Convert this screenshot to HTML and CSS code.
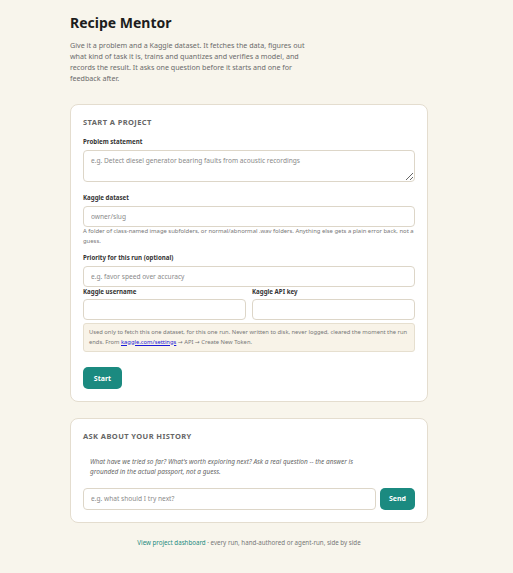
FILE: index.html
```html
<!DOCTYPE html>
<html>
<head>
<meta charset="utf-8">
<link rel="stylesheet" href="styles.css">
</head>
<body>
<main class="page">
  <h1 class="title">Recipe Mentor</h1>
  <p class="intro">Give it a problem and a Kaggle dataset. It fetches the data, figures out what kind of task it is, trains and quantizes and verifies a model, and records the result. It asks one question before it starts and one for feedback after.</p>

  <section class="card">
    <h2 class="card-title">START A PROJECT</h2>
    <label class="label">Problem statement</label>
    <textarea class="field textarea" placeholder="e.g. Detect diesel generator bearing faults from acoustic recordings"></textarea>

    <label class="label">Kaggle dataset</label>
    <input class="field" placeholder="owner/slug">
    <p class="hint">A folder of class-named image subfolders, or normal/abnormal .wav folders. Anything else gets a plain error back, not a guess.</p>

    <label class="label">Priority for this run (optional)</label>
    <input class="field" placeholder="e.g. favor speed over accuracy">

    <div class="cols">
      <div class="col">
        <label class="label tight">Kaggle username</label>
        <input class="field">
      </div>
      <div class="col">
        <label class="label tight">Kaggle API key</label>
        <input class="field">
      </div>
    </div>
    <div class="note">Used only to fetch this one dataset, for this one run. Never written to disk, never logged, cleared the moment the run ends. From <a href="#">kaggle.com/settings</a> → API → Create New Token.</div>
    <button class="btn start">Start</button>
  </section>

  <section class="card card2">
    <h2 class="card-title">ASK ABOUT YOUR HISTORY</h2>
    <p class="ask">What have we tried so far? What's worth exploring next? Ask a real question -- the answer is grounded in the actual passport, not a guess.</p>
    <div class="ask-row">
      <input class="field grow" placeholder="e.g. what should I try next?">
      <button class="btn send">Send</button>
    </div>
  </section>

  <p class="footer"><a href="#">View project dashboard</a> · every run, hand-authored or agent-run, side by side</p>
</main>
</body>
</html>
```
FILE: styles.css
```css
* { box-sizing: border-box; }
html, body { margin: 0; padding: 0; }
body {
  background: #f8f5ec;
  font-family: "Noto Sans", "Open Sans", sans-serif;
  color: #222;
}
.page {
  width: 358px;
  margin: 0 0 0 70px;
  padding-top: 12px;
}
.title {
  font-size: 14px;
  font-weight: 700;
  margin: 0;
  line-height: 22px;
  color: #1d1d1d;
}
.intro {
  font-size: 7.15px;
  line-height: 11px;
  color: #6b6b6b;
  margin: 5.5px 0 0;
  width: 245px;
}
.card {
  background: #fff;
  border: 1px solid #e4ddcf;
  border-radius: 8px;
  padding: 12px;
  margin-top: 20.5px;
  display: flex;
  flex-direction: column;
}
.card2 { margin-top: 15.5px; }
.card-title {
  font-size: 7.5px;
  font-weight: 700;
  letter-spacing: 0.4px;
  color: #666;
  margin: 0 0 8.5px;
  line-height: 11px;
}
.label {
  display: block;
  font-size: 6.15px;
  font-weight: 700;
  color: #333;
  line-height: 9px;
  margin-bottom: 4.5px;
}
.label.tight { margin-bottom: 2.5px; }
.field {
  display: block;
  width: 100%;
  height: 21px;
  margin: 0;
  border: 1px solid #ddd6c8;
  border-radius: 4px;
  background: #fff;
  font-family: inherit;
  font-size: 6.6px;
  padding: 0 7px;
  color: #333;
  outline: none;
}
.field::placeholder { color: #8a8a8a; }
.field.textarea {
  height: 32px;
  padding: 5px 7px;
  resize: vertical;
  margin-bottom: 10.5px;
}
.hint {
  font-size: 5.9px;
  line-height: 9.5px;
  color: #777;
  margin: 0 0 6.5px;
}
.cols {
  display: grid;
  grid-template-columns: 1fr 1fr;
  gap: 6px;
  margin-top: 0;
}
.note {
  margin-top: 3.5px;
  background: #f8f3e8;
  border: 1px solid #e6dfcf;
  border-radius: 3px;
  padding: 4px 5px;
  font-family: "Noto Sans", "DejaVu Sans", sans-serif;
  font-size: 5.8px;
  line-height: 9.5px;
  color: #777;
}
.note a { color: #1a1ad8; }
.btn {
  background: #1b8a80;
  color: #fff;
  border: none;
  border-radius: 5px;
  font-family: inherit;
  font-weight: 700;
  font-size: 7px;
  height: 22px;
  padding: 0;
}
.start {
  align-self: flex-start;
  margin-top: 15px;
  width: 39px;
}
.ask {
  font-style: italic;
  font-size: 6.5px;
  line-height: 10px;
  color: #666;
  margin: 6.5px 0 11px 7px;
  width: 275px;
}
.ask-row {
  display: flex;
  gap: 4px;
}
.grow { flex: 1; height: 22px; }
.send { width: 35px; }
.footer {
  text-align: center;
  font-size: 6.2px;
  line-height: 8px;
  color: #777;
  margin: 16px 0 0;
}
.footer a { color: #1b8a80; text-decoration: none; }
```
